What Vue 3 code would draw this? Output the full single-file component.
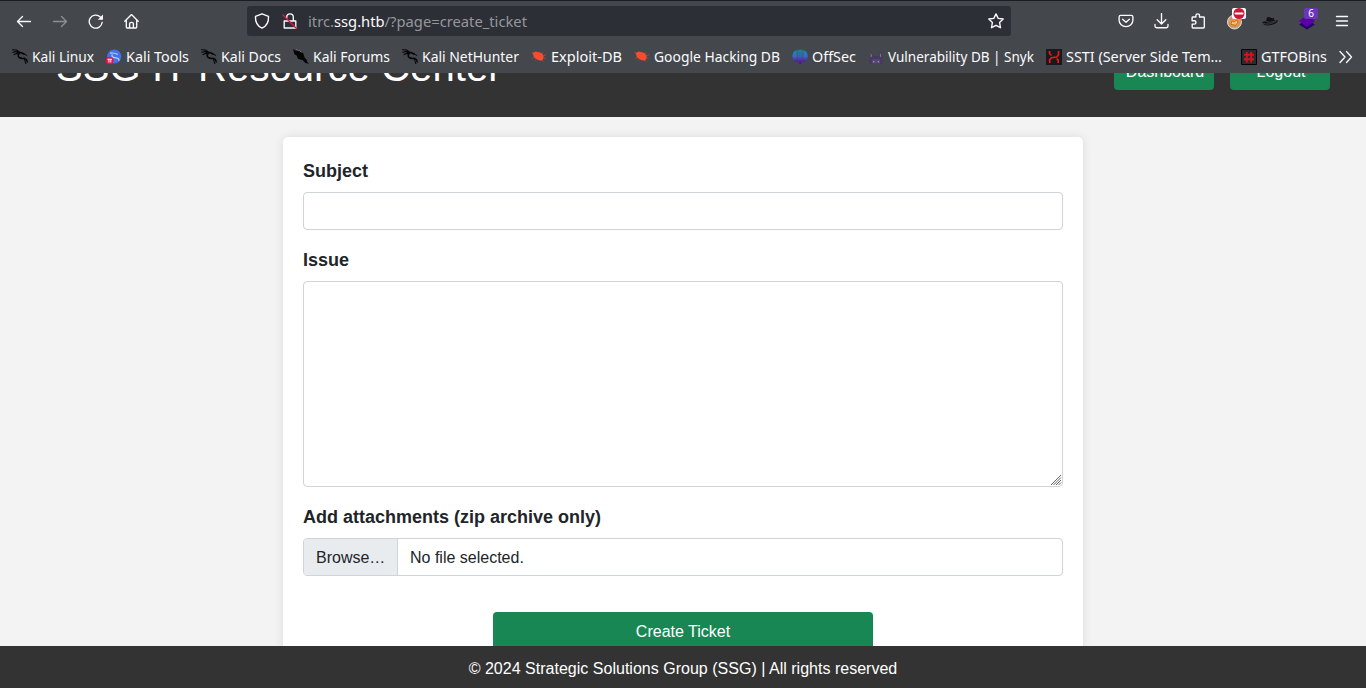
<script setup>
const bookmarks = [
  { label: 'Kali Linux', icon: 'dragon', width: 94, text: 62 },
  { label: 'Kali Tools', icon: 'tools', width: 95, text: 63 },
  { label: 'Kali Docs', icon: 'dragon', width: 92, text: 60 },
  { label: 'Kali Forums', icon: 'forum', width: 109, text: 77 },
  { label: 'Kali NetHunter', icon: 'dragon', width: 129, text: 97 },
  { label: 'Exploit-DB', icon: 'bug', width: 103, text: 71 },
  { label: 'Google Hacking DB', icon: 'bug', width: 158, text: 126 },
  { label: 'OffSec', icon: 'offsec', width: 76, text: 44 },
  { label: 'Vulnerability DB | Snyk', icon: 'snyk', width: 178, text: 146 },
  { label: 'SSTI (Server Side Tem…', icon: 'ssti', width: 195, text: 156 },
  { label: 'GTFOBins', icon: 'gtfo', width: 98, text: 66 },
]
</script>

<template>
  <div class="window">
    <div class="chrome">
      <div class="navbar">
        <div class="nav-buttons">
          <svg viewBox="0 0 16 16"><path d="M14.500 8.500H1.500M6.500 3.500 1.500 8.500 6.500 13.500" /></svg>
          <svg class="dim" viewBox="0 0 16 16"><path d="M1.500 8.500h13M9.500 3.500 14.500 8.500 9.500 13.500" /></svg>
          <svg viewBox="0 0 16 16"><path d="M14.200 9.300A6.500 6.500 0 1 1 12.300 4" /><path d="M15 1.500v5.200H9.800z" fill="#fbfbfe" stroke="none" /></svg>
          <svg viewBox="0 0 16 16"><path d="M.8 8.300 7.500 1.600 14.200 8.300M2.300 7v7.100q0 .9.900.9h8.600q.9 0 .9-.9V7M5.600 14.800v-4q0-1.500 1.900-1.500t1.900 1.500v4" /></svg>
        </div>
        <div class="urlbar">
          <svg class="shield" viewBox="0 0 16 16"><path d="M8 .8 14.500 3.300C14.800 8.500 12.500 13.200 8 15.200 3.500 13.200 1.200 8.500 1.500 3.300z" /></svg>
          <svg class="lock" viewBox="0 0 16 16"><path d="M2.200 8h11.600v7H2.200zM4.700 5V4.200a3.300 3.300 0 0 1 6.600 0V8" /><path d="M1 2 14.500 15.500" class="slash" /></svg>
          <svg class="url" width="219" height="24"><text x="0" y="18" textLength="219" lengthAdjust="spacingAndGlyphs">itrc.<tspan class="domain">ssg.htb</tspan>/?page=create_ticket</text></svg>
          <svg class="star" viewBox="0 0 16 16"><path d="M8 .9 10.200 5.400 15.200 6 11.600 9.600 12.500 14.700 8 12.300 3.500 14.700 4.400 9.600.8 6l5-.6z" /></svg>
        </div>
        <div class="extensions">
          <svg viewBox="0 0 16 16"><path d="M2.700 2.400h10.600q1.600 0 1.600 1.600v3.300a6.900 6.300 0 0 1-13.800 0V4q0-1.600 1.600-1.600zM4.600 6.200 8 9.300l3.400-3.100" /></svg>
          <svg viewBox="0 0 16 16"><path d="M7.500 .5v10.200M3.200 6.700 7.500 11l4.300-4.300M1 11.500v1.600q0 1.600 1.600 1.600h9.800q1.600 0 1.600-1.600v-1.600" /></svg>
          <svg viewBox="0 0 16 16"><path d="M2.100 7.200V4.700q0-.7.700-.7h3.100V2.600a1.800 1.800 0 0 1 3.600 0V4h4q.8 0 .8.800v9.400q0 .8-.8.800H3q-.8 0-.8-.8v-3.100h2.100a1.700 1.700 0 0 0 0-3.400H2.100z" /></svg>
          <div class="extension">
            <svg viewBox="0 0 18 18"><circle cx="8.500" cy="10" r="7" fill="#b8ac9d" stroke="#e4d7c7" stroke-width="1" /><path d="M3 12.500 5 6l9-1 1 4-3 5-6 1z" fill="#f2943b" stroke="#d38343" stroke-width=".6" /><path d="M5 12 6 9l2 1 3-2 1 2-2 3z" fill="#f7c17a" stroke="#774822" stroke-width=".5" /></svg>
            <span class="badge blocked"><svg viewBox="0 0 14 11"><circle cx="7" cy="5.500" r="5.500" fill="#cb1735" stroke="none" /><path d="M3.500 5.500h7" stroke="#fff" stroke-width="2" /></svg></span>
          </div>
          <svg viewBox="0 0 16 16"><path d="M.2 10Q.3 8 4.200 8.300L4.800 4.800Q5.500 3.300 8.300 4.500T11.700 4.600L12.500 7.700l3.300-.4q.5 2.600-5 4.300Q3 14 .2 10z" fill="#101214" stroke="none" /><path d="M4.300 8.700q3 1.500 7.900-.2M1 10.300q6 2.500 13-2" stroke="#606367" stroke-width=".5" /></svg>
          <div class="extension">
            <svg viewBox="0 0 18 18"><path d="m1 12.500 8-5 8 5-8 5z" fill="#27006a" stroke="none" /><path d="m1 9 8-6 8 6-8 6z" fill="#5b00a8" stroke="none" /></svg>
            <span class="badge count">6</span>
          </div>
          <svg viewBox="0 0 16 16"><path d="M2.500 3.500h11M2.500 8h11M2.500 12.500h11" /></svg>
        </div>
      </div>
      <div class="bookmarks">
        <div v-for="item in bookmarks" :key="item.label" class="bookmark" :style="{ width: item.width + 'px' }">
          <svg class="favicon" viewBox="0 0 16 16">
            <g v-if="item.icon === 'dragon'" fill="none" stroke="#050607" stroke-linecap="round" stroke-linejoin="round">
              <path d="M.4.700 4.500 1 7 2.800M.8 3.200 4 2.600l3.500 1.300M2 5.600l2.500-1.200 2.300.6" stroke-width="1.100" />
              <path d="M5.500 3.200Q9.500 3 12 5.300M7 4.500Q5.300 7.200 7.300 8.500T12 9.200Q14.900 10 15.200 13" stroke-width="1.500" />
              <path d="m11 4 3.800 2.500M12.500 10.500l1.300 4.200" stroke-width="1" />
            </g>
            <g v-else-if="item.icon === 'forum'">
              <path d="M0 0 2.500 1.600 5 .8 7.800 3l2.200.8 1.800 5.300 1.600 1.200.8 2.500 1.800 2-3.700-.7-2.800-3.200-4.300-1-1.600-3.400-2.200-1.200z" fill="#050607" /><path d="m3 .7 3.500 1 1.800 1.600" fill="none" stroke="#b8bcc0" stroke-width=".5" />
            </g>
            <g v-else-if="item.icon === 'tools'">
              <circle cx="8.200" cy="7.500" r="7" fill="#4472ef" /><path d="M4 4.200q4-.8 7.800 1.300M6.300 5.500q-1 2.500 1.500 2.800t4 1q1.300 1 1.300 2.500" fill="none" stroke="#bdd5ff" stroke-width="1.200" /><circle cx="3.700" cy="11.500" r="3.800" fill="#e81643" /><path d="M1.500 10.300H6M2.900 10.300v3.200m1.900-3.200v3.200" fill="none" stroke="#fff" stroke-width="1" />
            </g>
            <g v-else-if="item.icon === 'bug'">
              <path d="m1.700 4 3-1.500 3.200.8 2.700.8 2 2.600-.2 3-1.900 2-3.500-.7-4-2.500z" fill="#fb4b2e" /><path d="m2 5-1-2m2.500 5.500L1.300 9.500m4.400.4-1.500 1.300m6.600-.2 1.700 1.700m.3-4 1.800.8M10.500 5l1.700-2M12.200 6.800l2.800-1" stroke="#c44b3b" stroke-width=".7" />
            </g>
            <g v-else-if="item.icon === 'offsec'">
              <defs><linearGradient id="offsec-wing" gradientUnits="userSpaceOnUse" x1="0" y1="1" x2="0" y2="14"><stop stop-color="#0897a9" /><stop offset=".5" stop-color="#3b67ca" /><stop offset="1" stop-color="#5800a5" /></linearGradient></defs>
              <path d="M4.800 1v12.200Q.4 11.500.4 7T4.800 1zM5.500.700h1.300v12.600H5.500zM7.300.700h1.500V15H7.300zM9.300.700h1.300v12.600H9.300zM11.300 1q4.400 1.500 4.400 6t-4.400 6.200z" fill="url(#offsec-wing)" />
            </g>
            <g v-else-if="item.icon === 'snyk'">
              <path d="M1.500 15V8L2.300 1.500 5.200 7h5.600l2.500-5.500L14.500 8v7z" fill="#463963" /><path d="M2.700 3.500 4.200 7l-1.500 1.500zM13 3.500 11.700 7l1.500 1.500z" fill="#94747b" /><path d="M4 10h8v4.500H4z" fill="#54476d" /><path d="M5 12h1.400v1.400H5zm4.700 0h1.400v1.400H9.700z" fill="#978ba8" />
            </g>
            <g v-else-if="item.icon === 'ssti'">
              <path d="M0 0h16v16H0z" fill="#17191d" /><path d="M3.500 2v2.500l2 2M12.500 2v4L10.500 8 5.500 8.700 3.700 10.500V14M10.700 9.700l1.500 1.300v3" fill="none" stroke="#ef1717" stroke-width="1.700" />
            </g>
            <g v-else>
              <path d="M.5.500h15v15H.5z" fill="#292c2f" stroke="#050505" /><path d="M5.800 3v10.500m4.400-10.500v10.500M3 5.700h10m-10 4.600h10" stroke="#cf1519" stroke-width="1.900" />
            </g>
          </svg>
          <svg class="bookmark-label" :width="item.text" height="24"><text x="0" y="17" :textLength="item.text" lengthAdjust="spacingAndGlyphs">{{ item.label }}</text></svg>
        </div>
        <svg class="more" viewBox="0 0 16 16"><path d="m1 2.500 5 5.500-5 5.500M7.500 2.500l5 5.500-5 5.500" /></svg>
      </div>
    </div>

    <header>
      <h1>SSG IT Resource Center</h1>
      <nav><button>Dashboard</button><button>Logout</button></nav>
    </header>
    <main>
      <form @submit.prevent>
        <label for="subject">Subject</label>
        <input id="subject" class="control" type="text">
        <label for="issue">Issue</label>
        <div class="issue-field">
          <textarea id="issue" class="control"></textarea>
          <svg class="grip" viewBox="0 0 12 12"><path d="M1 11 11 1M3.500 11 11 3.500M6 11l5-5M8.500 11 11 8.500" /></svg>
        </div>
        <label>Add attachments (zip archive only)</label>
        <div class="control file"><span class="browse">Browse…</span><span class="filename">No file selected.</span></div>
        <button class="submit">Create Ticket</button>
      </form>
    </main>
    <footer>© 2024 Strategic Solutions Group (SSG) | All rights reserved</footer>
  </div>
</template>

<style>
body { margin: 0; overflow: hidden; }
</style>
<style scoped>
* { box-sizing: border-box; }
.window { width: 1366px; height: 688px; display: flex; flex-direction: column; overflow: hidden; background: #f3f3f3; color: #212529; font: 16px/24px "Liberation Sans", Arial, sans-serif; }
.chrome { height: 73px; flex: none; border-top: 1px solid #1b1d24; background: #44474b; color: #fbfbfe; font-family: "Noto Sans", sans-serif; }
.navbar { height: 40px; display: flex; align-items: center; }
svg { display: block; flex: none; }
.navbar svg, .more { width: 16px; height: 16px; fill: none; stroke: #fbfbfe; stroke-width: 1.35; stroke-linecap: round; stroke-linejoin: round; }
.nav-buttons { width: 247px; display: flex; gap: 20px; padding-left: 16px; }
.nav-buttons .dim { opacity: .4; }
.urlbar { width: 764px; height: 30px; display: flex; align-items: center; border-radius: 3px; background: #2d2f37; padding: 0 7px; }
.urlbar .lock { margin-left: 12px; }
.urlbar .slash { stroke: #e51642; }
.navbar .url { width: 219px; height: 24px; margin-left: 10px; fill: #96979b; stroke: none; font-size: 15px; overflow: visible; }
.url .domain { fill: #fbfbfe; }
.urlbar .star { margin-left: auto; }
.extensions { display: flex; align-items: center; gap: 20px; padding-left: 107px; }
.extension { position: relative; width: 16px; height: 18px; }
.navbar .extension > svg { width: 18px; height: 18px; }
.badge { position: absolute; left: 6px; top: -4px; width: 14px; height: 11px; border-radius: 2px; color: #fff; font-size: 10px; line-height: 11px; text-align: center; }
.blocked { background: #fff; }
.navbar .badge svg { width: 14px; height: 11px; }
.count { background: #6936bd; }
.bookmarks { height: 32px; display: flex; align-items: center; padding-left: 12px; }
.bookmark { display: flex; align-items: center; gap: 4px; flex: none; }
.favicon { width: 16px; height: 16px; }
.bookmark-label { fill: #fbfbfe; font-size: 15px; overflow: visible; }
header { height: 44px; flex: none; overflow: hidden; display: flex; align-items: flex-end; justify-content: space-between; padding: 0 36px 27px 56px; background: #333; color: #fff; }
h1 { margin: 0 0 -1px; font-size: 40px; line-height: 48px; font-weight: 400; letter-spacing: .08px; }
nav { display: flex; gap: 16px; }
button { border: 0; border-radius: 4px; background: #198754; color: #fff; font: inherit; height: 38px; width: 100px; padding: 2px 0 0; }
nav button { padding-left: 2px; }
main { flex: 1; min-height: 0; overflow: hidden; padding-top: 20px; }
form { width: 800px; height: 560px; margin: 0 auto; padding: 20px; border-radius: 5px; background: #fff; box-shadow: 0 0 10px rgba(0, 0, 0, .1); }
label { display: block; height: 27px; margin-bottom: 8px; font-size: 18px; font-weight: 700; line-height: 29px; }
.control { display: block; width: 100%; height: 38px; margin: 0 0 16px; border: 1px solid #ced4da; border-radius: 4px; background: #fff; outline: 0; }
.issue-field { position: relative; height: 206px; margin-bottom: 16px; }
textarea.control { height: 206px; resize: none; }
.grip { position: absolute; right: 1px; bottom: 1px; width: 12px; height: 12px; fill: none; stroke: #555; stroke-width: .9; }
.file { display: flex; overflow: hidden; line-height: 37px; }
.browse { width: 94px; flex: none; padding-left: 12px; border-right: 1px solid #ced4da; background: #e9ecef; }
.filename { padding-left: 12px; }
.submit { display: block; width: 380px; margin: 36px auto 0; }
footer { height: 42px; flex: none; padding-top: 1px; background: #333; color: #fff; text-align: center; line-height: 44px; letter-spacing: .015px; }
</style>
